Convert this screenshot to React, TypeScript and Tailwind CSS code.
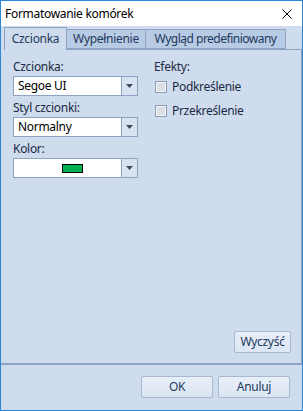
import React from 'react';

export default function App() {
  return (
    <div className="w-[303px] h-[411px] flex flex-col border border-[#2b87d8] bg-[#cfdcee] font-['Noto_Sans',sans-serif] text-[12px] tracking-[-0.3px] text-[#1b2a44] overflow-hidden">
      {/* Title bar */}
      <div className="h-[25px] bg-white flex items-center justify-between pl-[4px] pr-[10px] text-black">
        <span className="leading-none">Formatowanie komórek</span>
        <CloseIcon />
      </div>

      {/* Tabs */}
      <div className="h-[23px] flex items-end pl-[3px] relative z-10">
        <div className="w-[63px] h-[23px] -mb-px flex items-center justify-center border border-b-0 border-[#8ea3c2] bg-[#cfdcee] text-[#1e395b]">
          Czcionka
        </div>
        <div className="w-[79px] h-[20px] flex items-center justify-center border border-l-0 border-[#8ea3c2] bg-[#b8cbe5] text-[#1e395b]">
          Wypełnienie
        </div>
        <div className="w-[140px] h-[20px] flex items-center justify-center border border-l-0 border-[#8ea3c2] bg-[#b8cbe5] text-[#1e395b] tracking-[-0.5px]">
          Wygląd predefiniowany
        </div>
      </div>

      {/* Panel */}
      <div className="h-[314px] ml-[3px] border-t border-r border-[#8ea3c2] flex flex-col">
        <div className="flex pl-[9px] pt-[9px] gap-[16px]">
          <div className="w-[125px] flex flex-col">
            <Field label="Czcionka:">
              <span className="pl-[4px]">Segoe UI</span>
            </Field>
            <div className="h-[4px]" />
            <Field label="Styl czcionki:">
              <span className="pl-[4px]">Normalny</span>
            </Field>
            <div className="h-[4px]" />
            <Field label="Kolor:">
              <div className="flex-1 flex justify-center">
                <div className="w-[21px] h-[9px] border border-black bg-[#00b050] ml-[10px]" />
              </div>
            </Field>
          </div>
          <div className="flex flex-col">
            <div className="h-[16px] leading-[16px]">Efekty:</div>
            <Check label="Podkreślenie" className="mt-[5px]" />
            <Check label="Przekreślenie" className="mt-[10px]" />
          </div>
        </div>
        <div className="flex-1" />
        <div className="flex justify-end pr-[10px] pb-[10px]">
          <Btn className="w-[57px] h-[22px]">Wyczyść</Btn>
        </div>
      </div>

      {/* Separator */}
      <div className="h-[2px] bg-[#8ea3c2]" />

      {/* Footer */}
      <div className="flex-1 flex justify-end items-start gap-[5px] pt-[11px] pr-[12px]">
        <Btn className="w-[72px] h-[22px]">OK</Btn>
        <Btn className="w-[72px] h-[22px]">Anuluj</Btn>
      </div>
    </div>
  );
}

function Field({ label, children }: { label: string; children: React.ReactNode }) {
  return (
    <div className="flex flex-col gap-[1px]">
      <div className="h-[16px] leading-[16px]">{label}</div>
      <div className="h-[20px] flex border border-[#8ea3c2] bg-white">
        <div className="flex-1 flex items-center text-black">{children}</div>
        <div className="w-[16px] border-l border-[#8ea3c2] bg-[#d8e3f1] flex items-center justify-center">
          <svg width="7" height="4" viewBox="0 0 7 4">
            <path d="M0 0h7L3.5 4z" fill="#3b4a63" />
          </svg>
        </div>
      </div>
    </div>
  );
}

function Check({ label, className }: { label: string; className?: string }) {
  return (
    <div className={`flex items-center gap-[5px] ${className ?? ''}`}>
      <div className="w-[12px] h-[12px] ml-[1px] border border-[#8d9db6] bg-[#f4f5f7] p-[1px]">
        <div className="w-full h-full bg-[#dcdfe4]" />
      </div>
      <span className="leading-[14px] text-[#1b2a44]">{label}</span>
    </div>
  );
}

function Btn({ children, className }: { children: React.ReactNode; className?: string }) {
  return (
    <div
      className={`flex items-center justify-center rounded-[2px] border border-[#a7b8d0] bg-gradient-to-b from-[#e8eff9] to-[#dbe5f3] text-[#1e395b] ${className ?? ''}`}
    >
      {children}
    </div>
  );
}

const CloseIcon = () => (
  <svg width="10" height="10" viewBox="0 0 10 10" className="text-black">
    <path d="M0.5 0.5l9 9M9.5 0.5l-9 9" stroke="currentColor" strokeWidth="1" />
  </svg>
);
